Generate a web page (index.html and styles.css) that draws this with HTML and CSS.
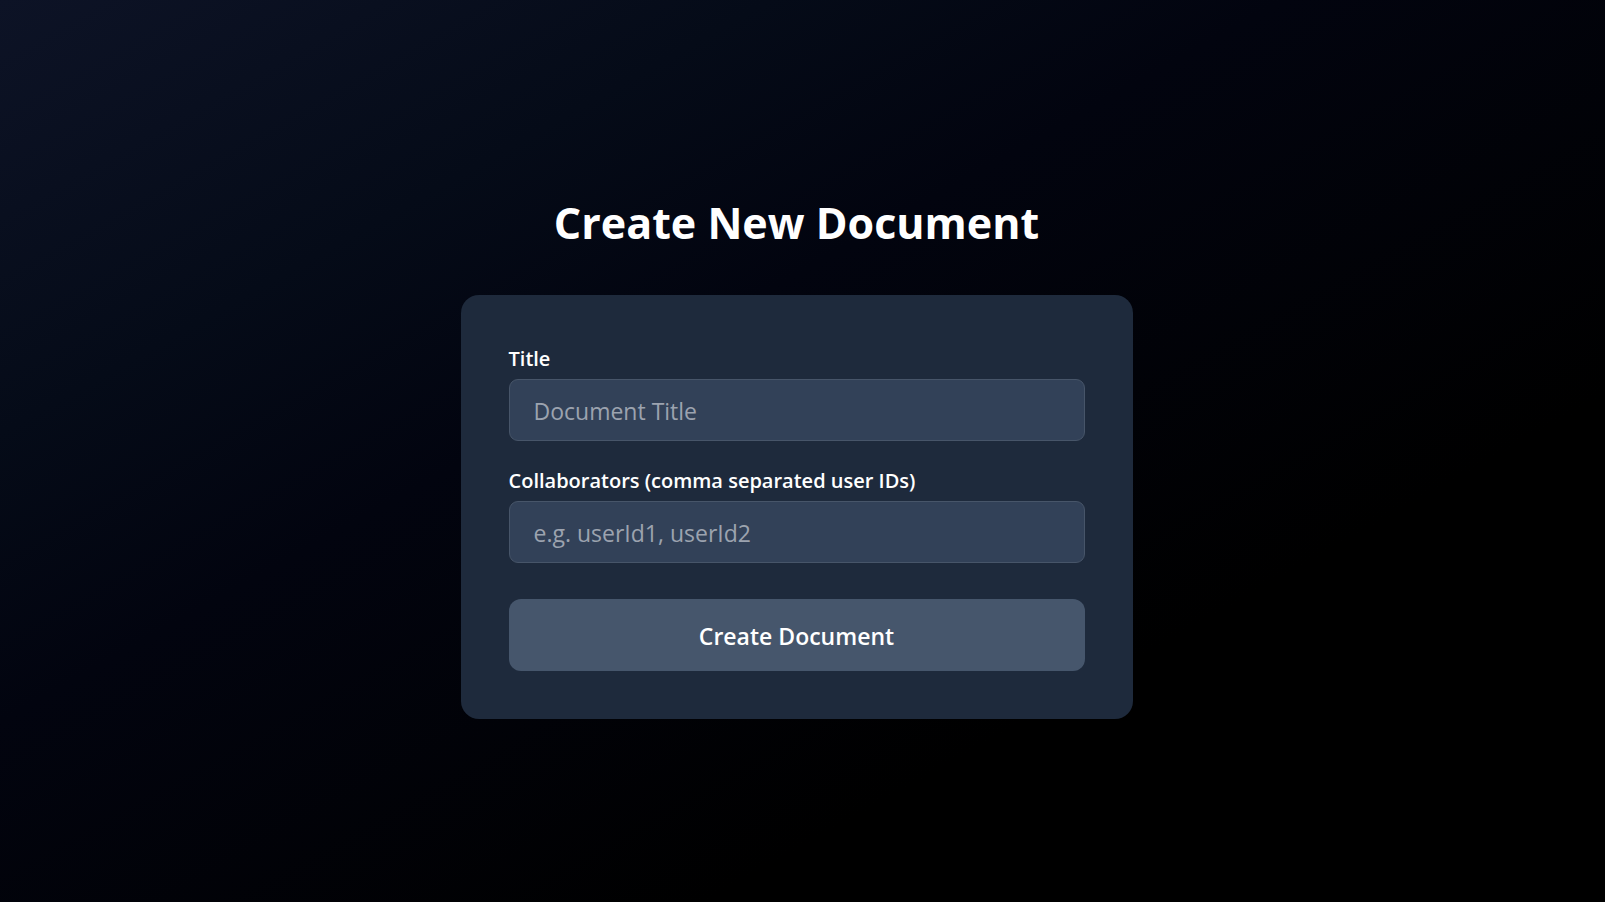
FILE: index.html
```html
<!DOCTYPE html>
<html lang="en">
<head>
<meta charset="utf-8">
<meta name="viewport" content="width=device-width, initial-scale=1">
<title>Create New Document</title>
<link rel="stylesheet" href="styles.css">
</head>
<body class="page">
<main class="content">
<h1 class="heading">Create New Document</h1>
<form class="card">
<div class="field">
<label class="label" for="title">Title</label>
<input class="input" id="title" type="text" placeholder="Document Title">
</div>
<div class="field">
<label class="label" for="collaborators">Collaborators (comma separated user IDs)</label>
<input class="input" id="collaborators" type="text" placeholder="e.g. userId1, userId2">
</div>
<button class="submit" type="submit">Create Document</button>
</form>
</main>
</body>
</html>
```
FILE: styles.css
```css
*, *::before, *::after {
  box-sizing: border-box;
}

.page {
  margin: 0;
  min-height: 100vh;
  display: flex;
  justify-content: center;
  align-items: center;
  padding: 34px 32px 24px 20px;
  background: linear-gradient(to bottom right, #0d1326, #050b18 24%, #02040f 40%, #000 72%);
  color: #fff;
  font-family: "Segoe UI", "Open Sans", "Noto Sans", sans-serif;
}

.content {
  width: 100%;
  max-width: 672px;
}

.heading {
  margin: 0 0 42px;
  font-size: 43px;
  line-height: 60px;
  font-weight: 700;
  text-align: center;
}

.card {
  display: flex;
  flex-direction: column;
  padding: 48px;
  border-radius: 18px;
  background: #1e2a3c;
}

.field {
  display: flex;
  flex-direction: column;
  gap: 4px;
  margin-bottom: 24px;
}

.label {
  font-size: 20px;
  line-height: 32px;
  font-weight: 600;
}

.input {
  width: 100%;
  height: 62px;
  padding: 2px 24px 0;
  border: 1px solid #475569;
  border-radius: 9px;
  background: #324158;
  color: #fff;
  font: inherit;
  font-size: 23px;
}

.input::placeholder {
  color: #9ca3af;
}

.submit {
  height: 72px;
  margin-top: 12px;
  padding: 2px 24px 0;
  border: 0;
  border-radius: 12px;
  background: #46566c;
  color: #fff;
  font: inherit;
  font-size: 23px;
  font-weight: 600;
}
```
